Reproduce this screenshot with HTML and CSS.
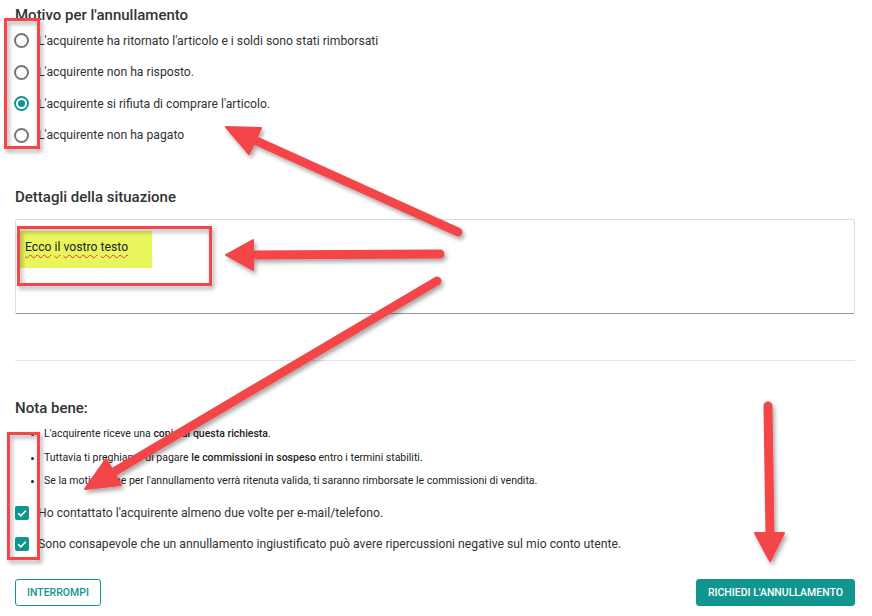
FILE: index.html
```html
<!DOCTYPE html>
<html lang="it">
<head>
  <meta charset="UTF-8" />
  <meta name="viewport" content="width=device-width, initial-scale=1.0"/>
  <title>Annullamento vendita</title>
  <link rel="stylesheet" href="styles.css">
</head>
<body>
  <div class="page">
    <h2 class="section-title">Motivo per l'annullamento</h2>
    <div class="reasons">
      <label class="radio-row"><span class="radio"></span>L'acquirente ha ritornato l'articolo e i soldi sono stati rimborsati</label>
      <label class="radio-row"><span class="radio"></span>L'acquirente non ha risposto.</label>
      <label class="radio-row"><span class="radio checked"></span>L'acquirente si rifiuta di comprare l'articolo.</label>
      <label class="radio-row"><span class="radio"></span>L'acquirente non ha pagato</label>
    </div>

    <h2 class="section-title details-title">Dettagli della situazione</h2>
    <div class="textarea">
      <div class="highlight"><span class="typo">Ecco</span> <span class="typo">il</span> <span class="typo">vostro</span> <span class="typo">testo</span></div>
    </div>

    <hr class="divider">

    <h2 class="section-title note-title">Nota bene:</h2>
    <ul class="notes">
      <li>L'acquirente riceve una <strong>copia di questa richiesta</strong>.</li>
      <li>Tuttavia ti preghiamo di pagare <strong>le commissioni in sospeso</strong> entro i termini stabiliti.</li>
      <li>Se la motivazione per l'annullamento verrà ritenuta valida, ti saranno rimborsate le commissioni di vendita.</li>
    </ul>

    <div class="checks">
      <label class="check-row">
        <span class="checkbox"><svg viewBox="0 0 14 14"><path d="M3.2 7.2l2.6 2.6 5-5" /></svg></span>
        Ho contattato l'acquirente almeno due volte per e-mail/telefono.
      </label>
      <label class="check-row">
        <span class="checkbox"><svg viewBox="0 0 14 14"><path d="M3.2 7.2l2.6 2.6 5-5" /></svg></span>
        Sono consapevole che un annullamento ingiustificato può avere ripercussioni negative sul mio conto utente.
      </label>
    </div>

    <div class="actions">
      <button class="btn btn-outline">Interrompi</button>
      <button class="btn btn-primary">Richiedi l'annullamento</button>
    </div>
  </div>

  <!-- annotation layer drawn over the form -->
  <svg class="annotations" width="872" height="616" viewBox="0 0 872 616">
    <defs>
      <filter id="shadow" x="-20%" y="-20%" width="140%" height="140%">
        <feDropShadow dx="2" dy="3" stdDeviation="2" flood-color="#000" flood-opacity="0.35"/>
      </filter>
    </defs>
    <g filter="url(#shadow)" class="marks">
      <rect x="5.5" y="19.5" width="33" height="128"/>
      <rect x="18.5" y="227.5" width="192" height="57"/>
      <rect x="8.5" y="433.5" width="30" height="125"/>
    </g>
    <g filter="url(#shadow)" class="arrows">
      <line x1="458" y1="232" x2="252" y2="139"/>
      <polygon points="226,127 261,128 249,154"/>
      <line x1="440" y1="254" x2="250" y2="255"/>
      <polygon points="226,255 253,240 253,270"/>
      <line x1="437" y1="281" x2="112" y2="473"/>
      <polygon points="85,489 106,459 121,485"/>
      <line x1="768" y1="406" x2="770" y2="536"/>
      <polygon points="770,561 755,533 784,533"/>
    </g>
  </svg>
</body>
</html>
```

FILE: styles.css
```css
body {
  margin: 0;
  font-family: Roboto, "Noto Sans", Arial, sans-serif;
  color: #333;
  background: #fff;
}
.page {
  width: 840px;
  padding: 5px 15px 0;
}
.section-title {
  margin: 0;
  font-size: 15px;
  font-weight: 500;
  line-height: 20px;
  color: #333;
}
.details-title {
  margin-top: 36px;
}
.note-title {
  margin-top: 37px;
}
.radio-row {
  display: flex;
  align-items: center;
  gap: 9px;
  height: 31.5px;
  font-size: 12.2px;
  color: #333;
}
.radio {
  box-sizing: border-box;
  width: 15px;
  height: 15px;
  margin-left: -1px;
  border: 2px solid #767676;
  border-radius: 50%;
  display: flex;
  align-items: center;
  justify-content: center;
}
.radio.checked {
  border-color: #11958f;
}
.radio.checked::after {
  content: "";
  width: 7px;
  height: 7px;
  border-radius: 50%;
  background: #11958f;
}
.textarea {
  box-sizing: border-box;
  margin-top: 12px;
  height: 95px;
  border: 1px solid #ddd;
  border-bottom-color: #999;
  border-radius: 2px;
  padding: 11px 4px;
}
.highlight {
  box-sizing: border-box;
  width: 132px;
  height: 37px;
  padding: 7px 5px;
  background: #e9f65b;
  font-size: 12.2px;
  line-height: 18px;
  color: #222;
}
.typo {
  text-decoration: underline wavy #e53935;
  text-decoration-thickness: 1px;
  text-underline-offset: 3px;
}
.divider {
  margin: 46px 0 0;
  border: 0;
  border-top: 1px solid #e3e3e3;
}
.notes {
  margin: 4px 0 0;
  padding-left: 29px;
  font-size: 10.5px;
  color: #222;
}
.notes li {
  line-height: 23.5px;
}
.notes strong {
  font-weight: 500;
}
.checks {
  margin-top: 5px;
}
.check-row {
  display: flex;
  align-items: center;
  gap: 9px;
  height: 31px;
  font-size: 12.2px;
  color: #333;
}
.checkbox {
  width: 14px;
  height: 14px;
  border-radius: 2px;
  background: #11958f;
  display: flex;
}
.checkbox svg {
  width: 14px;
  height: 14px;
  fill: none;
  stroke: #fff;
  stroke-width: 1.6;
}
.actions {
  margin-top: 19px;
  display: flex;
  justify-content: space-between;
}
.btn {
  height: 27px;
  padding: 0 11px;
  border-radius: 3px;
  font-family: Roboto, Arial, sans-serif;
  font-size: 10.5px;
  font-weight: 500;
  text-transform: uppercase;
  cursor: pointer;
}
.btn-outline {
  background: #fff;
  color: #11958f;
  border: 1px solid #11958f;
}
.btn-primary {
  background: #11958f;
  color: #fff;
  border: 1px solid #11958f;
}
.annotations {
  position: absolute;
  left: 0;
  top: 0;
  pointer-events: none;
}
.marks rect {
  fill: none;
  stroke: #f44448;
  stroke-width: 3;
}
.arrows line {
  stroke: #f44448;
  stroke-width: 9;
  stroke-linecap: round;
}
.arrows polygon {
  fill: #f44448;
  stroke: #f44448;
  stroke-width: 2;
  stroke-linejoin: round;
}
```
